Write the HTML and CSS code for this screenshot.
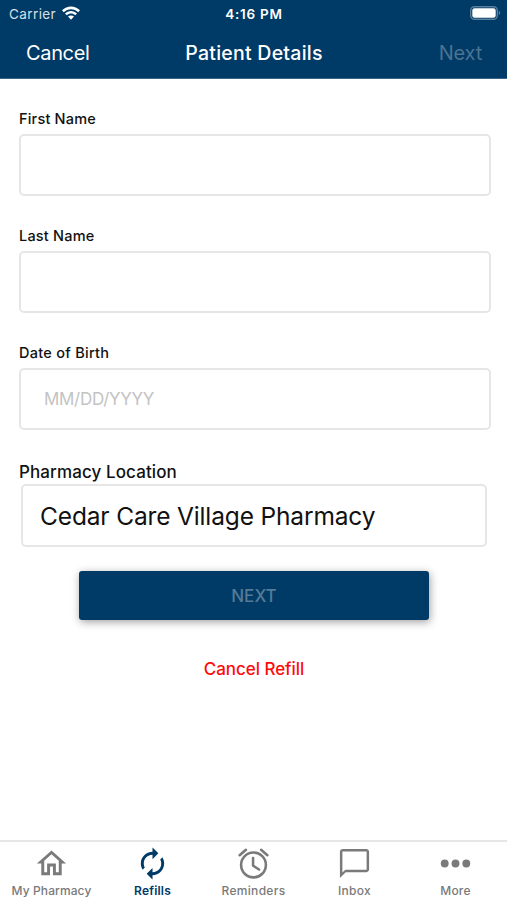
FILE: index.html
```
<!DOCTYPE html>
<html lang="en">
<head>
<meta charset="utf-8">
<title>Patient Details</title>
<link rel="stylesheet" href="styles.css">
</head>
<body>
<div class="screen">
  <header class="header">
    <div class="status">
      <div class="carrier"><span>Carrier</span>
        <svg class="wifi" viewBox="0 0 18 14"><path d="M0 4.3C5-.9 13-.9 18 4.3L16.2 6.2C12.2 2.2 5.8 2.2 1.8 6.2ZM3 7.5C6.4 4.1 11.6 4.1 15 7.5L13.2 9.3C10.8 6.9 7.2 6.9 4.8 9.3ZM6 10.6C7.7 9 10.3 9 12 10.6L9 13.7Z"/></svg>
      </div>
      <div class="time">4:16 PM</div>
      <svg class="battery" viewBox="0 0 31 14"><rect class="case" x=".7" y=".7" width="26.6" height="12.6" rx="3.8"/><rect x="2.3" y="2.3" width="23.4" height="9.4" rx="2.3"/><path class="cap" d="M28.8 4.8q3 2.2 0 4.4Z"/></svg>
    </div>
    <nav class="navbar">
      <span class="cancel">Cancel</span>
      <span class="title">Patient Details</span>
      <span class="next">Next</span>
    </nav>
  </header>
  <main class="form">
    <label class="field"><span class="label first">First Name</span><input class="input" type="text"></label>
    <label class="field"><span class="label last">Last Name</span><input class="input" type="text"></label>
    <label class="field"><span class="label dob">Date of Birth</span><input class="input" type="text" placeholder="MM/DD/YYYY"></label>
    <div class="location">
      <span class="location-label">Pharmacy Location</span>
      <div class="select"><span>Cedar Care Village Pharmacy</span></div>
    </div>
    <button class="submit">NEXT</button>
    <a class="cancel-refill">Cancel Refill</a>
  </main>
  <nav class="tabs">
    <div class="tab"><svg class="icon" viewBox="0 0 24 24"><path d="M12 5.69l5 4.5V18h-2v-6H9v6H7v-7.81l5-4.5M12 3L2 12h3v8h6v-6h2v6h6v-8h3L12 3z"/></svg><span class="t-home">My Pharmacy</span></div>
    <div class="tab active"><svg class="icon" viewBox="0 0 24 24"><path d="M12 6v3l4-4-4-4v3c-4.42 0-8 3.58-8 8 0 1.57.46 3.03 1.24 4.26L6.7 14.8c-.45-.83-.7-1.79-.7-2.8 0-3.31 2.69-6 6-6zm6.76 1.74L17.3 9.2c.44.84.7 1.79.7 2.8 0 3.31-2.69 6-6 6v-3l-4 4 4 4v-3c4.42 0 8-3.58 8-8 0-1.57-.46-3.03-1.24-4.26z"/></svg><span class="t-refills">Refills</span></div>
    <div class="tab"><svg class="icon" viewBox="0 0 24 24"><g class="clock"><circle cx="12" cy="13" r="8.500"/><path d="M11.700 8.200v5.300l4.100 2.600M2.500 6.300l4.300-3.700M21.500 6.300l-4.300-3.700"/></g></svg><span class="t-reminders">Reminders</span></div>
    <div class="tab"><svg class="icon" viewBox="0 0 24 24"><path d="M20 2H4c-1.100 0-2 .9-2 2v18l4-4h14c1.100 0 2-.9 2-2V4c0-1.100-.9-2-2-2zm0 14.300H5.700L3.700 18.200V3.700h16.600v12.600z"/></svg><span class="t-inbox">Inbox</span></div>
    <div class="tab"><svg class="icon" viewBox="0 0 24 24"><circle cx="4.600" cy="12" r="2.700"/><circle cx="12" cy="12" r="2.700"/><circle cx="19.400" cy="12" r="2.700"/></svg><span class="t-more">More</span></div>
  </nav>
</div>
</body>
</html>
```
FILE: styles.css
```
* { box-sizing: border-box; }
body { margin: 0; font-family: Inter, "Liberation Sans", sans-serif; background: #fff; color: #111; }
.screen { width: 507px; height: 900px; display: flex; flex-direction: column; overflow: hidden; }
.header { height: 79px; background: #003a66; color: #fff; border-bottom: 1px solid #356588; flex: none; }
.status { height: 27px; display: grid; grid-template-columns: 1fr auto 1fr; align-items: center; padding: 0 7px 0 9px; }
.carrier { display: flex; align-items: center; gap: 6px; font-size: 13.5px; letter-spacing: .4px; color: #d5e0e8; }
.wifi { width: 18px; height: 14px; fill: #fff; margin-top: -2px; }
.time { font-size: 13.5px; font-weight: 600; letter-spacing: .75px; margin-right: 1px; }
.battery { width: 31px; height: 14px; justify-self: end; fill: #fff; margin-top: -1px; margin-right: -1px; }
.battery .case { fill: none; stroke: #587f9c; stroke-width: 1.4; }
.battery .cap { fill: #587f9c; }
.navbar { height: 51px; display: grid; grid-template-columns: 1fr auto 1fr; align-items: center; padding: 0 25px; font-size: 20px; }
.cancel { letter-spacing: -.35px; padding-left: 1px; }
.title { font-size: 19.5px; font-weight: 500; letter-spacing: .25px; padding-left: 1px; }
.next { justify-self: end; letter-spacing: -.2px; color: #4b7391; }
.form { flex: 1; padding: 30px 16px 0 19px; display: flex; flex-direction: column; }
.field { display: flex; flex-direction: column; height: 117px; }
.label { height: 25px; line-height: 20px; font-size: 14.5px; font-weight: 500; align-self: flex-start; letter-spacing: .2px; }
.dob { letter-spacing: .27px; }
.input { width: 472px; height: 62px; border: 2px solid #e6e6e6; border-radius: 5px; background: #fff; padding: 0 23px; font: 17px Inter, sans-serif; letter-spacing: -.3px; outline: 0; }
.input::placeholder { color: #c3c3c3; opacity: 1; }
.location { height: 111px; padding-top: 1px; }
.location-label { display: block; width: max-content; height: 23px; line-height: 22px; font-size: 17px; font-weight: 500; letter-spacing: .1px; }
.select { margin: 0 4px 0 2px; height: 63px; border: 2px solid #e6e6e6; border-radius: 5px; display: flex; align-items: center; padding-left: 17px; font-size: 24.5px; letter-spacing: -.15px; }
.submit { align-self: center; position: relative; left: -1px; width: 350px; height: 49px; border: 0; border-radius: 3px; background: #003a66; color: #557b96; font: 500 17px Inter, sans-serif; box-shadow: 1px 2px 8px rgba(0,0,0,.38); }
.cancel-refill { align-self: center; margin-top: 38px; margin-right: 2px; line-height: 22px; font-size: 17px; font-weight: 500; letter-spacing: -.05px; color: #ff0a0a; }
.tabs { height: 60px; flex: none; border-top: 2px solid #e6e6e6; display: grid; grid-template-columns: repeat(5, 101px); justify-content: center; }
.tab { display: flex; flex-direction: column; align-items: center; padding-top: 4px; color: #7a7a7a; font-size: 12px; font-weight: 500; line-height: 16px; }
.icon { width: 35px; height: 35px; fill: currentColor; display: block; margin-bottom: 2px; }
.clock { fill: none; stroke: currentColor; stroke-width: 1.75; stroke-linecap: round; stroke-linejoin: round; }
.t-home { letter-spacing: .1px; }
.t-reminders { letter-spacing: .3px; }
.t-inbox { letter-spacing: .25px; }
.t-more { letter-spacing: .2px; }
.active { color: #003a66; font-weight: 600; }
.t-refills { letter-spacing: .2px; }
```
